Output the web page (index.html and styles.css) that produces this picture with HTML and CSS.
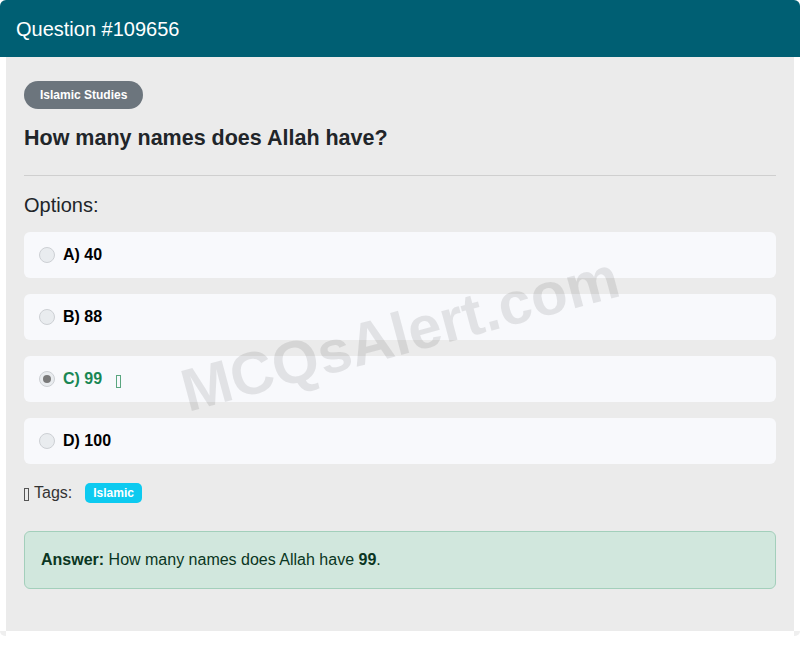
FILE: index.html
```html
<!DOCTYPE html>
<html lang="en">
<head>
  <meta charset="UTF-8">
  <meta name="viewport" content="width=device-width, initial-scale=1.0">
  <title>Question #109656</title>
  <link rel="stylesheet" href="styles.css">
</head>
<body>
  <div class="card">
    <header class="card-header">
      <h1>Question #109656</h1>
    </header>
    <div class="card-body">
      <span class="badge badge-cat">Islamic Studies</span>
      <h2 class="question">How many names does Allah have?</h2>
      <hr>
      <h3 class="options-title">Options:</h3>
      <ul class="options">
        <li class="option"><span class="radio"></span><span class="label">A) 40</span></li>
        <li class="option"><span class="radio"></span><span class="label">B) 88</span></li>
        <li class="option correct"><span class="radio checked"></span><span class="label">C) 99</span><span class="glyph"></span></li>
        <li class="option"><span class="radio"></span><span class="label">D) 100</span></li>
      </ul>
      <div class="tags">
        <span class="glyph dark"></span>
        <span class="tags-label">Tags:</span>
        <span class="badge badge-tag">Islamic</span>
      </div>
      <div class="answer">
        <strong>Answer:</strong> How many names does Allah have <strong>99</strong>.
      </div>
      <div class="watermark">MCQsAlert.com</div>
    </div>
    <div class="card-foot"></div>
  </div>
</body>
</html>
```

FILE: styles.css
```css
body {
  margin: 0;
  font-family: "Liberation Sans", Arial, sans-serif;
  font-size: 16px;
  color: #212529;
  background: #fff;
}
.card {
  width: 800px;
}
.card-header {
  background: #005f73;
  border-radius: 6px 6px 0 0;
  height: 57px;
  display: flex;
  align-items: center;
  padding: 0 16px;
  box-sizing: border-box;
}
.card-header h1 {
  margin: 0;
  color: #fff;
  font-size: 20px;
  font-weight: 400;
  padding-top: 2px;
}
.card-body {
  position: relative;
  margin: 0 6px;
  background: #ebebeb;
  padding: 24px 18px 42px;
  overflow: hidden;
}
.card-foot {
  height: 5px;
  border: solid #efefef;
  border-width: 0 6px;
  border-radius: 0 0 6px 6px;
}
.badge {
  display: inline-flex;
  align-items: center;
  color: #fff;
  font-weight: 700;
  font-size: 12px;
}
.badge-cat {
  background: #6c757d;
  height: 28px;
  padding: 0 16px;
  border-radius: 14px;
}
.badge-tag {
  background: #0dcaf0;
  height: 20px;
  padding: 0 8px;
  border-radius: 5px;
}
.question {
  margin: 16px 0 0;
  font-size: 21.5px;
  line-height: 26px;
  font-weight: 700;
}
hr {
  margin: 24px 0 0;
  border: 0;
  border-top: 1px solid #cfcfcf;
}
.options-title {
  margin: 17px 0 0;
  font-size: 20px;
  font-weight: 400;
  line-height: 24px;
}
.options {
  list-style: none;
  margin: 15px 0 0;
  padding: 0;
}
.option {
  display: flex;
  align-items: center;
  height: 46px;
  padding: 0 15px;
  background: #f8f9fc;
  border-radius: 6px;
  margin-bottom: 16px;
}
.option .label {
  font-weight: 700;
  color: #000;
}
.option.correct .label {
  color: #198754;
}
.radio {
  width: 16px;
  height: 16px;
  box-sizing: border-box;
  border: 1px solid #cdd0d4;
  border-radius: 50%;
  background: #e9ecef;
  margin-right: 8px;
  display: flex;
  align-items: center;
  justify-content: center;
}
.radio.checked::after {
  content: "";
  width: 8px;
  height: 8px;
  border-radius: 50%;
  background: #7a7a7a;
}
.glyph {
  display: inline-block;
  width: 5px;
  height: 13px;
  box-sizing: border-box;
  border: 1px solid #5aa67f;
  margin: 4px 0 0 14px;
}
.glyph.dark {
  border-color: #555;
  margin: 2px 5px 0 0;
}
.tags {
  display: flex;
  align-items: center;
  margin-top: 19px;
  height: 20px;
}
.tags-label {
  color: #333;
  margin-right: 13px;
}
.answer {
  margin-top: 28px;
  background: #d1e7dd;
  border: 1px solid #a3cfbb;
  border-radius: 6px;
  color: #0a3622;
  padding: 16px;
  line-height: 24px;
}
.watermark {
  position: absolute;
  left: 394px;
  top: 277px;
  transform: translate(-50%, -50%) rotate(-15deg);
  font-size: 60px;
  font-weight: 700;
  color: rgba(0, 0, 0, 0.09);
  white-space: nowrap;
  pointer-events: none;
}
```
